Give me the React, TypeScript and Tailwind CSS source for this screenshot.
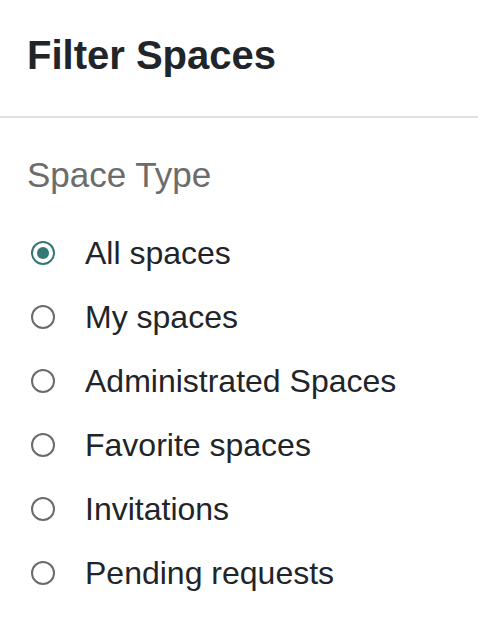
import { useState } from 'react';

const options = [
  'All spaces',
  'My spaces',
  'Administrated Spaces',
  'Favorite spaces',
  'Invitations',
  'Pending requests',
];

export default function App() {
  const [selected, setSelected] = useState('All spaces');

  return (
    <div className="w-[478px] h-[642px] bg-white font-['Liberation_Sans',Arial,sans-serif] overflow-hidden">
      <div className="h-[116px] pl-[27px] pt-[35px]">
        <h1 className="text-[40px] leading-[40px] font-bold text-[#212529]">Filter Spaces</h1>
      </div>
      <div className="h-[2px] bg-[#e0e0e0]" />

      <div className="pl-[27px] pt-[39px]">
        <h2 className="text-[35px] leading-[35px] text-[#6c6c6c]">Space Type</h2>

        <div className="mt-[45px] flex flex-col gap-[32px]">
          {options.map((option) => {
            const isActive = selected === option;
            return (
              <label
                key={option}
                className="flex items-start cursor-pointer"
                onClick={() => setSelected(option)}
              >
                <span
                  className={`ml-[4px] mt-[4px] w-[24px] h-[24px] rounded-full border-2 flex items-center justify-center shrink-0 ${
                    isActive ? 'border-[#347976]' : 'border-[#6b6b6b]'
                  }`}
                >
                  {isActive && <span className="w-[12px] h-[12px] rounded-full bg-[#347976]" />}
                </span>
                <span className="ml-[30px] text-[32px] leading-[32px] text-[#212529]">{option}</span>
              </label>
            );
          })}
        </div>
      </div>
    </div>
  );
}
